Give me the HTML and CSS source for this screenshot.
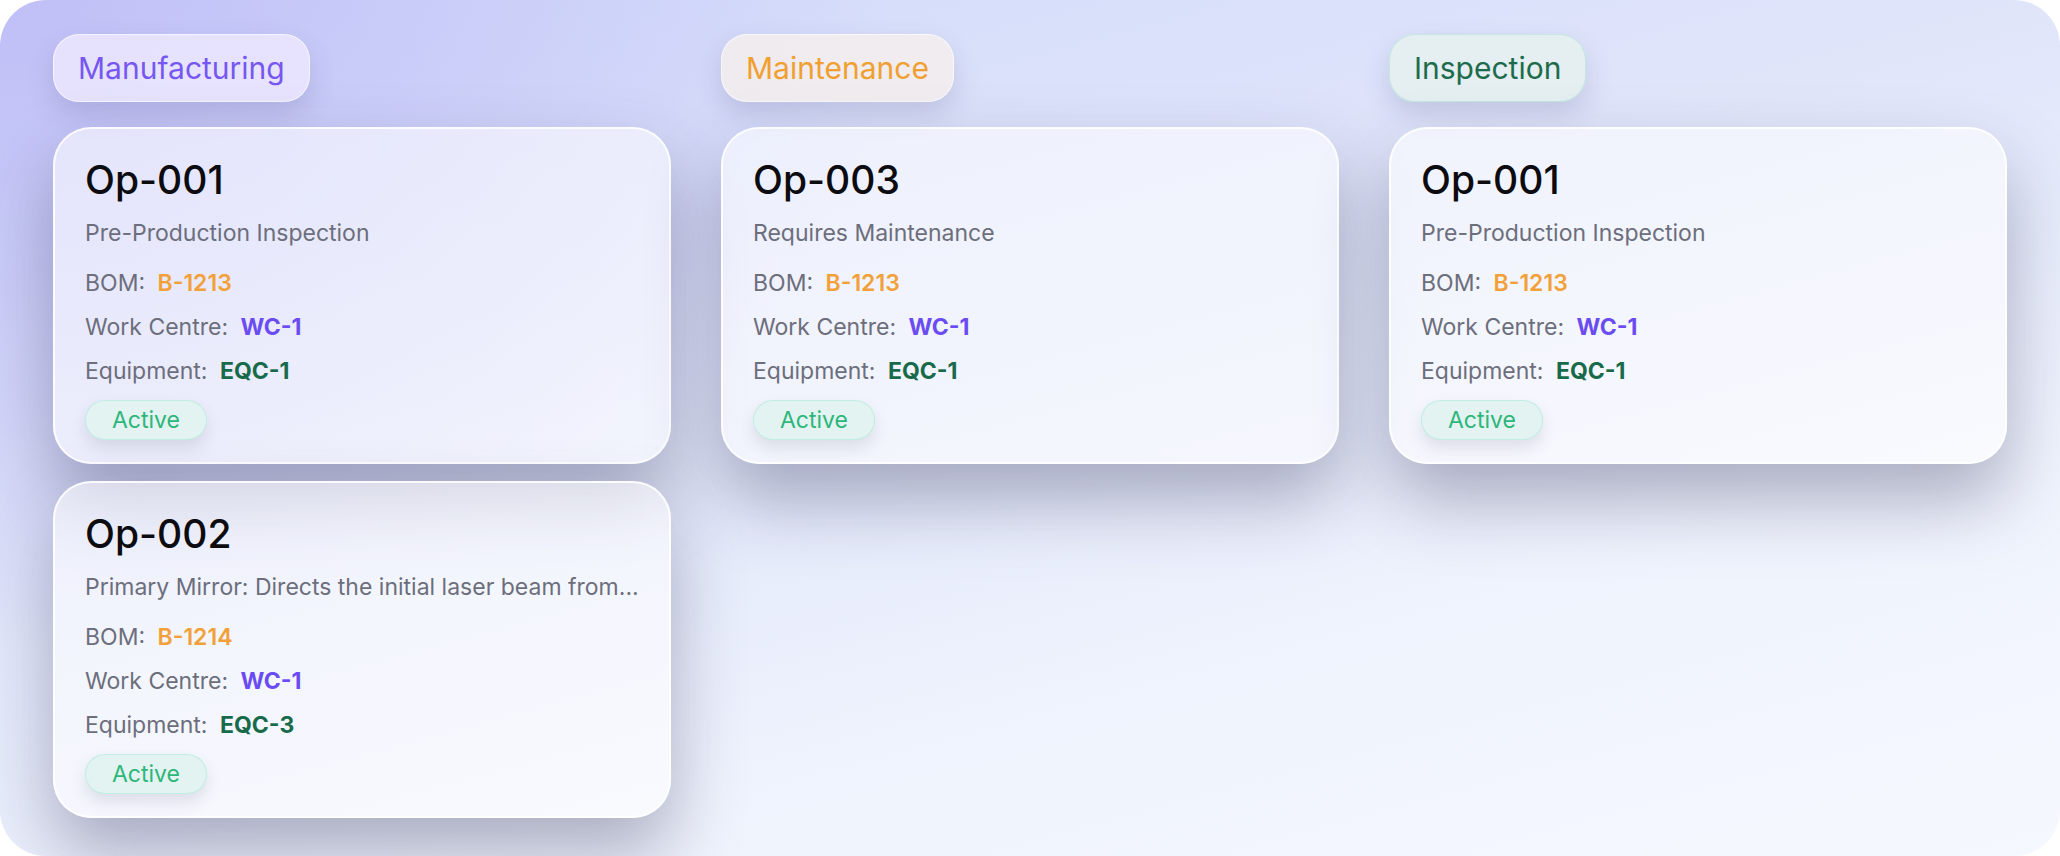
FILE: index.html
```html
<!DOCTYPE html>
<html lang="en">
<head>
  <meta charset="UTF-8" />
  <meta name="viewport" content="width=device-width, initial-scale=1.0" />
  <title>Operations Board</title>
  <link rel="stylesheet" href="styles.css">
</head>
<body>
  <div class="board">

    <!-- Manufacturing column -->
    <div class="column">
      <div class="stage stage-manufacturing">Manufacturing</div>

      <div class="op-card">
        <h2>Op-001</h2>
        <p class="desc">Pre-Production Inspection</p>
        <div class="row">BOM: <span class="bom">B-1213</span></div>
        <div class="row">Work Centre: <span class="wc">WC-1</span></div>
        <div class="row">Equipment: <span class="eqc">EQC-1</span></div>
        <span class="status">Active</span>
      </div>

      <div class="op-card">
        <h2>Op-002</h2>
        <p class="desc">Primary Mirror: Directs the initial laser beam from...</p>
        <div class="row">BOM: <span class="bom">B-1214</span></div>
        <div class="row">Work Centre: <span class="wc">WC-1</span></div>
        <div class="row">Equipment: <span class="eqc">EQC-3</span></div>
        <span class="status">Active</span>
      </div>
    </div>

    <!-- Maintenance column -->
    <div class="column">
      <div class="stage stage-maintenance">Maintenance</div>

      <div class="op-card">
        <h2>Op-003</h2>
        <p class="desc">Requires Maintenance</p>
        <div class="row">BOM: <span class="bom">B-1213</span></div>
        <div class="row">Work Centre: <span class="wc">WC-1</span></div>
        <div class="row">Equipment: <span class="eqc">EQC-1</span></div>
        <span class="status">Active</span>
      </div>
    </div>

    <!-- Inspection column -->
    <div class="column">
      <div class="stage stage-inspection">Inspection</div>

      <div class="op-card">
        <h2>Op-001</h2>
        <p class="desc">Pre-Production Inspection</p>
        <div class="row">BOM: <span class="bom">B-1213</span></div>
        <div class="row">Work Centre: <span class="wc">WC-1</span></div>
        <div class="row">Equipment: <span class="eqc">EQC-1</span></div>
        <span class="status">Active</span>
      </div>
    </div>

  </div>
</body>
</html>
```

FILE: styles.css
```css
html, body {
  margin: 0;
  background: #ffffff;
}
body {
  font-family: "Inter", "Open Sans", sans-serif;
  color: #6c6e7c;
}
.board {
  height: 856px;
  box-sizing: border-box;
  padding: 34px 53px 0;
  border-radius: 46px;
  overflow: hidden;
  display: grid;
  grid-template-columns: repeat(3, 1fr);
  gap: 50px;
  align-items: start;
  background:
    radial-gradient(ellipse 900px 650px at 0% 0%, #c0bff7 0%, rgba(192,191,247,0) 100%),
    linear-gradient(165deg, #d0d9fa 0%, #e0e5fa 40%, #eff3fd 70%, #f5f8fe 100%);
}
.column {
  display: flex;
  flex-direction: column;
  gap: 17px;
  align-items: flex-start;
}

/* stage pills */
.stage {
  height: 68px;
  line-height: 66px;
  padding: 0 24px;
  border-radius: 26px;
  font-size: 30px;
  margin-bottom: 8px;
  box-sizing: border-box;
  border: 1px solid rgba(255, 255, 255, 0.6);
  box-shadow: 0 12px 26px rgba(90, 90, 140, 0.2);
}
.stage-manufacturing {
  color: #7657f1;
  background: rgba(236, 232, 255, 0.85);
}
.stage-maintenance {
  color: #f0a030;
  background: rgba(241, 236, 238, 0.95);
}
.stage-inspection {
  color: #1c6c4c;
  background: rgba(229, 238, 240, 0.95);
  border-color: rgba(190, 232, 222, 0.9);
}

/* operation cards */
.op-card {
  align-self: stretch;
  box-sizing: border-box;
  padding: 27px 30px 22px;
  border-radius: 38px;
  background: rgba(255, 255, 255, 0.55);
  border: 2px solid rgba(255, 255, 255, 0.85);
  box-shadow: 0 36px 70px rgba(52, 54, 88, 0.36);
}
.op-card h2 {
  margin: 0;
  font-size: 39px;
  font-weight: 500;
  line-height: 48px;
  color: #0b0b10;
}
.desc {
  margin: 9px 0 8px;
  font-size: 23px;
  line-height: 40px;
  white-space: nowrap;
  overflow: hidden;
  text-overflow: ellipsis;
}
.row {
  font-size: 23px;
  line-height: 44px;
}
.row span {
  margin-left: 6px;
}
.bom {
  color: #f2a13a;
  font-weight: 600;
}
.wc {
  color: #6a4cf2;
  font-weight: 700;
}
.eqc {
  color: #186b4a;
  font-weight: 700;
}
.status {
  display: inline-block;
  margin-top: 7px;
  height: 40px;
  line-height: 38px;
  padding: 0 26px;
  box-sizing: border-box;
  border-radius: 20px;
  font-size: 23px;
  color: #2db67a;
  background: #e3f3f1;
  border: 1px solid rgba(190, 236, 226, 0.9);
  box-shadow: 0 8px 16px rgba(70, 80, 100, 0.14);
}
```
